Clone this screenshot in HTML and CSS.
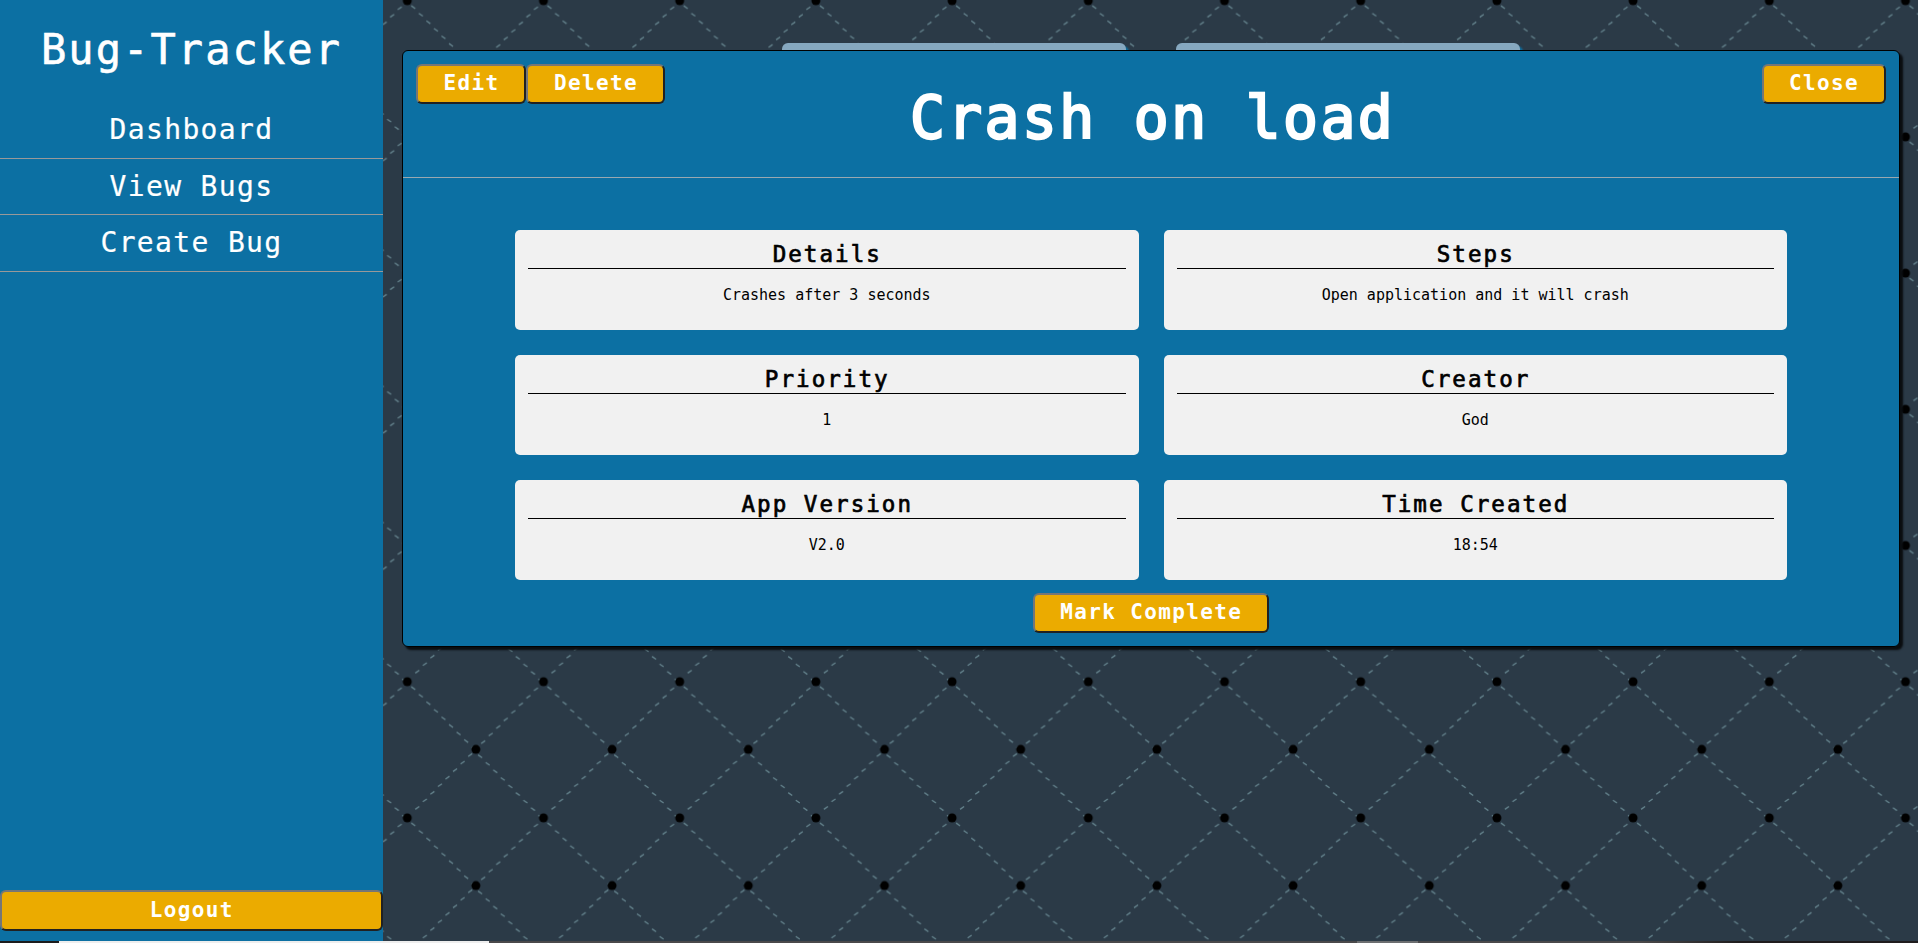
FILE: index.html
```
<!DOCTYPE html>
<html lang="en">
<head>
<meta charset="utf-8">
<title>Bug-Tracker</title>
<link rel="stylesheet" href="styles.css">
</head>
<body>
<div class="app">
  <nav class="sidebar">
    <h1 class="brand">Bug-Tracker</h1>
    <ul class="menu">
      <li>Dashboard</li>
      <li>View Bugs</li>
      <li>Create Bug</li>
    </ul>
    <button class="btn logout">Logout</button>
  </nav>
  <main class="content">
    <svg class="pattern" width="1535" height="943" aria-hidden="true">
      <defs>
        <pattern id="net" x="24.3" y="0.7" width="136.2" height="136.2" patternUnits="userSpaceOnUse">
          <g fill="none" stroke="#64838d" stroke-width="1.3">
            <path d="M8,127.6l4-2.8m3.55-4.75l4-2.8m3.55-4.75l4-2.8m3.55-4.75l4-2.8m3.55-4.75l4-2.8m3.55-4.75l4-2.8m3.55-4.75l4-2.8m3.55-4.75l4-2.8"/>
            <path d="M73.8,61.8l4-2.8m3.55-4.75l4-2.8m3.55-4.75l4-2.8m3.55-4.75l4-2.8m3.55-4.75l4-2.8m3.55-4.75l4-2.8m3.55-4.75l4-2.8m3.55-4.75l4-2.8"/>
            <path d="M4,5.1l4 2.8m3.55 4.75l4 2.8m3.55 4.75l4 2.8m3.55 4.75l4 2.8m3.55 4.75l4 2.8m3.55 4.75l4 2.8m3.55 4.75l4 2.8m3.55 4.75l4 2.8m3.55 4.75l4 2.8"/>
            <path d="M70.8,73.2l4 2.8m3.55 4.75l4 2.8m3.55 4.75l4 2.8m3.55 4.75l4 2.8m3.55 4.75l4 2.8m3.55 4.75l4 2.8m3.55 4.75l4 2.8m3.55 4.75l4 2.8m3.55 4.75l4 2.8"/>
          </g>
          <circle cx="0" cy="0" r="4.5"/><circle cx="136.2" cy="0" r="4.5"/>
          <circle cx="0" cy="136.2" r="4.5"/><circle cx="136.2" cy="136.2" r="4.5"/>
          <circle cx="68.6" cy="67.7" r="4.5"/>
        </pattern>
      </defs>
      <rect width="1535" height="943" fill="url(#net)"/>
    </svg>
    <div class="bug-list">
      <div class="bug-card"></div>
      <div class="bug-card"></div>
    </div>
    <section class="modal">
      <header class="modal-head">
        <div class="actions"><button class="btn">Edit</button><button class="btn">Delete</button></div>
        <h2 class="title">Crash on load</h2>
        <div class="actions end"><button class="btn">Close</button></div>
      </header>
      <div class="grid">
        <article class="field"><h3>Details</h3><p>Crashes after 3 seconds</p></article>
        <article class="field"><h3>Steps</h3><p>Open application and it will crash</p></article>
        <article class="field"><h3>Priority</h3><p>1</p></article>
        <article class="field"><h3>Creator</h3><p>God</p></article>
        <article class="field"><h3>App Version</h3><p>V2.0</p></article>
        <article class="field"><h3>Time Created</h3><p>18:54</p></article>
      </div>
      <button class="btn complete">Mark Complete</button>
    </section>
  </main>
  <div class="edge"></div>
</div>
</body>
</html>
```
FILE: styles.css
```
* { box-sizing: border-box; margin: 0; padding: 0; }
body { font-family: "DejaVu Sans Mono", monospace; font-size: 15px; overflow: hidden; }
.app { position: relative; display: flex; width: 1918px; height: 943px; background: #2b3a47; }

.sidebar { width: 383px; height: 943px; padding-bottom: 12px; display: flex; flex-direction: column; background: #0c70a3; color: #fff; text-align: center; }
.brand { height: 102px; padding-top: 20px; font-size: 42px; line-height: 60px; font-weight: 400; letter-spacing: 2.1px; -webkit-text-stroke: 0.6px #fff; }
.menu { list-style: none; font-size: 28px; letter-spacing: 1.35px; -webkit-text-stroke: 0.2px #fff; }
.menu li { height: 56.5px; line-height: 56px; border-bottom: 1px solid #999; }

.btn { height: 40px; padding: 0 25px 1px 25.5px; border: 2px solid; border-color: #767676 #212121 #212121 #767676; border-radius: 6px; background: #ebab00; color: #fff; font-family: inherit; font-size: 21px; font-weight: 700; letter-spacing: 1.35px; line-height: 33px; white-space: nowrap; }
.logout { margin-top: auto; width: 383px; height: 41px; }

.content { position: relative; flex: 1; height: 943px; overflow: hidden; }
.pattern { position: absolute; left: 0; top: 0; }
.bug-list { position: relative; display: flex; gap: 50px; padding: 43px 0 0 399px; }
.bug-card { width: 344px; height: 200px; border-radius: 6px; background: #86a8c0; box-shadow: 3px 3px 2px #0c70a3; }

.modal { position: absolute; left: 19px; top: 50px; width: 1498px; height: 597px; display: flex; flex-direction: column; align-items: center; border: 1px solid #000; border-radius: 6px; background: #0c70a3; box-shadow: 3px 3px 2px #0a0d10; }
.modal-head { width: 100%; height: 127px; display: grid; grid-template-columns: 1fr auto 1fr; padding: 13px; border-bottom: 1px solid #9aa8b0; }
.actions { display: flex; align-items: flex-start; }
.end { justify-content: flex-end; }
.title { padding: 19px 0 0 3px; color: #fff; font-size: 58px; line-height: 70px; font-weight: 400; letter-spacing: 2.4px; -webkit-text-stroke: 2.4px #fff; }
.grid { margin-top: 52px; width: 1272px; display: grid; grid-template-columns: 1fr 1fr; gap: 25px; }
.field { height: 100px; padding: 12px 13px; border-radius: 5px; background: #f1f1f1; color: #000; text-align: center; }
.field h3 { height: 27px; padding-left: 1px; border-bottom: 1px solid #000; font-size: 22.5px; line-height: 25px; font-weight: 400; letter-spacing: 2.05px; -webkit-text-stroke: 0.7px #000; }
.field p { margin-top: 16px; font-size: 15px; line-height: 20px; }
.complete { margin-top: 13px; }

.edge { position: absolute; left: 0; bottom: 0; width: 1918px; height: 2px; background: linear-gradient(90deg, #1c1c1c 59px, #eee 59px 489px, #4a494a 489px 1357px, #6c6e70 1357px 1418px, #4a494a 1418px 1640px, #1f1c1d 1740px); }
```
